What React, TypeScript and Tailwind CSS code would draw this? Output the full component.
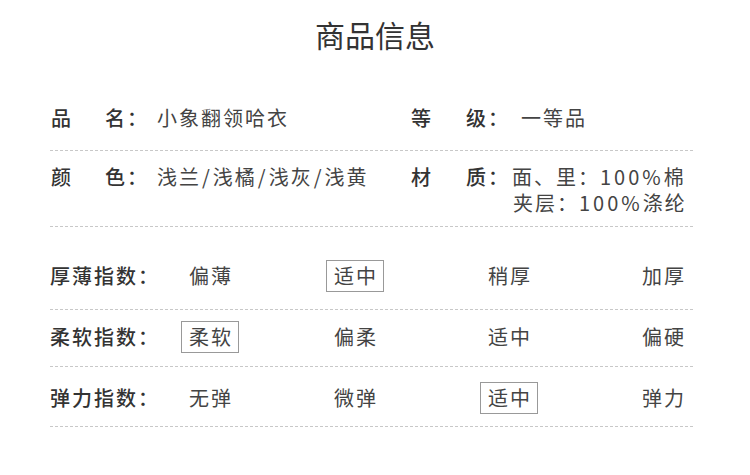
import React from "react";

const font = { fontFamily: '"Noto Sans CJK SC", "Noto Sans", sans-serif' };

function Opt({ text, on }: { text: string; on?: boolean }) {
  return (
    <div className="flex">
      <span
        className={
          "inline-block h-[32px] border pl-[7px] pr-[5px] leading-[30px] tracking-[2px] text-[20px] text-[#444] " +
          (on ? "border-[#999]" : "border-transparent")
        }
      >
        {text}
      </span>
    </div>
  );
}

function IndexRow({ label, opts, sel, pad }: { label: string; opts: string[]; sel: number; pad: string }) {
  return (
    <div className={"grid grid-cols-[131px_145px_154px_154px_1fr] items-center border-b border-dashed border-[#c8c8c8] " + pad}>
      <div className="text-[20px] font-medium tracking-[2px] text-[#333] leading-[32px]">{label}</div>
      {opts.map((o, i) => (
        <Opt key={i} text={o} on={i === sel} />
      ))}
    </div>
  );
}

function Sl() {
  return <span className="mx-[1px]">/</span>;
}

export default function App() {
  return (
    <div className="w-[750px] h-[475px] bg-white" style={font}>
      <div className="pt-[17px] text-center text-[30px] leading-[34px] text-[#333]">商品信息</div>
      <div className="mx-[50px] w-[643px]">
        <div className="grid grid-cols-[361px_1fr] border-b border-dashed border-[#c8c8c8] pt-[54px] pb-[19px] text-[20px] leading-[26px] tracking-[2px]">
          <div className="flex pl-[1px]">
            <div className="flex w-[106px] font-medium text-[#333]">
              <span className="w-[54px]">品</span>
              <span>名：</span>
            </div>
            <span className="text-[#444]">小象翻领哈衣</span>
          </div>
          <div className="flex">
            <div className="flex w-[110px] font-medium text-[#333]">
              <span className="w-[55px]">等</span>
              <span>级：</span>
            </div>
            <span className="text-[#444]">一等品</span>
          </div>
        </div>
        <div className="grid grid-cols-[361px_1fr] border-b border-dashed border-[#c8c8c8] pt-[13px] pb-[10px] text-[20px] leading-[26px] tracking-[2px]">
          <div className="flex pl-[1px]">
            <div className="flex w-[106px] font-medium text-[#333]">
              <span className="w-[54px]">颜</span>
              <span>色：</span>
            </div>
            <span className="text-[#444]">
              浅兰<Sl />浅橘<Sl />浅灰<Sl />浅黄
            </span>
          </div>
          <div className="flex">
            <div className="flex w-[101px] font-medium text-[#333]">
              <span className="w-[55px]">材</span>
              <span>质：</span>
            </div>
            <div className="text-[#444]">
              <div>
                面、里：<span className="tracking-[3px]">100%</span>棉
              </div>
              <div className="pl-[1px]">
                夹层：<span className="tracking-[3px]">100%</span>涤纶
              </div>
            </div>
          </div>
        </div>
        <IndexRow label="厚薄指数：" opts={["偏薄", "适中", "稍厚", "加厚"]} sel={1} pad="pt-[33px] pb-[17px]" />
        <IndexRow label="柔软指数：" opts={["柔软", "偏柔", "适中", "偏硬"]} sel={0} pad="pt-[11px] pb-[13px]" />
        <IndexRow label="弹力指数：" opts={["无弹", "微弹", "适中", "弹力"]} sel={2} pad="pt-[15px] pb-[12px]" />
      </div>
    </div>
  );
}
